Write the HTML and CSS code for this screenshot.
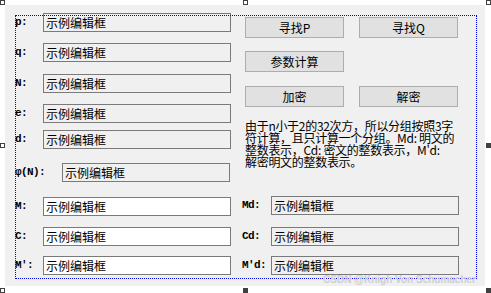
FILE: index.html
```html
<!DOCTYPE html>
<html lang="zh">
<head>
<meta charset="utf-8">
<link rel="stylesheet" href="styles.css">
</head>
<body>
<div class="handle hollow h-tl"></div>
<div class="handle hollow h-tm"></div>
<div class="handle hollow h-tr"></div>
<div class="handle hollow h-ml"></div>
<div class="handle solid h-mr"></div>
<div class="handle hollow h-bl"></div>
<div class="handle solid h-bm"></div>
<div class="handle solid h-br"></div>

<div class="dialog">
  <div class="col-left">
    <div class="row"><span class="lbl">p:</span><span class="edit ro">示例编辑框</span></div>
    <div class="row"><span class="lbl">q:</span><span class="edit ro">示例编辑框</span></div>
    <div class="row"><span class="lbl">N:</span><span class="edit ro">示例编辑框</span></div>
    <div class="row"><span class="lbl">e:</span><span class="edit ro">示例编辑框</span></div>
    <div class="row"><span class="lbl">d:</span><span class="edit ro">示例编辑框</span></div>
    <div class="row"><span class="lbl wide">φ(N):</span><span class="edit ro short">示例编辑框</span></div>
    <div class="row"><span class="lbl">M:</span><span class="edit">示例编辑框</span></div>
    <div class="row"><span class="lbl">C:</span><span class="edit">示例编辑框</span></div>
    <div class="row"><span class="lbl">M':</span><span class="edit">示例编辑框</span></div>
  </div>

  <div class="col-right">
    <div class="btn-row"><span class="btn">寻找P</span><span class="btn">寻找Q</span></div>
    <div class="btn-row"><span class="btn">参数计算</span></div>
    <div class="btn-row"><span class="btn">加密</span><span class="btn">解密</span></div>
    <p class="note">由于n小于2的32次方，所以分组按照3字<br>符计算，且只计算一个分组。Md: 明文的<br>整数表示，Cd: 密文的整数表示，M'd:<br>解密明文的整数表示。</p>
    <div class="row"><span class="lbl rl">Md:</span><span class="edit ro">示例编辑框</span></div>
    <div class="row"><span class="lbl rl">Cd:</span><span class="edit ro">示例编辑框</span></div>
    <div class="row"><span class="lbl rl">M'd:</span><span class="edit ro">示例编辑框</span></div>
  </div>

  <div class="guide"></div>
  <div class="watermark">CSDN @Knigh Von Schumacher</div>
</div>
</body>
</html>
```

FILE: styles.css
```css
html, body {
  margin: 0;
  padding: 0;
  background: #ffffff;
}
body {
  width: 491px;
  height: 293px;
  overflow: hidden;
  position: relative;
  font-family: "Noto Sans CJK SC", "Liberation Sans", sans-serif;
  font-size: 12px;
  color: #000;
}

/* resize handles */
.handle {
  position: absolute;
  width: 5px;
  height: 5px;
  box-sizing: border-box;
}
.hollow { border: 1px solid #404040; background: #fff; }
.solid { background: #404040; }
.h-tl { left: 0; top: 0; }
.h-tm { left: 243px; top: 0; }
.h-tr { left: 486px; top: 0; }
.h-ml { left: 0; top: 143px; }
.h-mr { left: 486px; top: 143px; }
.h-bl { left: 0; top: 288px; }
.h-bm { left: 243px; top: 288px; }
.h-br { left: 486px; top: 288px; }

/* dialog surface */
.dialog {
  position: absolute;
  left: 5px;
  top: 5px;
  width: 480px;
  height: 281px;
  background: #f0f0f0;
  display: flex;
  box-sizing: border-box;
  padding-left: 10px;
}

.col-left {
  width: 216px;
  padding-top: 8px;
  display: grid;
  grid-template-rows: 30px 31px 30px 26px 33px 34px 30px 29px 19px;
  align-content: start;
}

.row {
  display: flex;
  align-items: center;
  height: 19px;
}

.lbl {
  width: 28px;
  flex: none;
  font-family: "Liberation Mono", "DejaVu Sans Mono", monospace;
  font-size: 11px;
  font-weight: bold;
  letter-spacing: -0.6px;
  line-height: 19px;
}
.lbl.wide { width: 47px; }
.lbl.rl { width: 29px; }

.edit {
  box-sizing: border-box;
  width: 188px;
  height: 19px;
  border: 1px solid #7a7a7a;
  background: #ffffff;
  padding-left: 2px;
  display: flex;
  align-items: center;
  line-height: 1;
  white-space: nowrap;
}
.edit.ro { background: #f0f0f0; }
.edit.short { width: 168px; }

.col-right {
  margin-left: 11px;
  width: 218px;
  padding-top: 12px;
  display: grid;
  grid-template-rows: 34px 35px 34px 76px 31px 29px 19px;
  align-content: start;
}

.btn-row {
  display: flex;
  gap: 15px;
  padding-left: 3px;
}
.btn {
  box-sizing: border-box;
  width: 99px;
  height: 21px;
  background: #e1e1e1;
  border: 1px solid #adadad;
  display: flex;
  align-items: center;
  justify-content: center;
  line-height: 1;
}

.note {
  margin: 0;
  padding-left: 3px;
  line-height: 12px;
  letter-spacing: -0.3px;
  white-space: nowrap;
}

.guide {
  position: absolute;
  left: 10px;
  top: 10px;
  width: 460px;
  height: 262px;
  border: 1px dotted #0000ff;
  pointer-events: none;
}

.watermark {
  position: absolute;
  right: 9px;
  top: 269px;
  font-family: "Liberation Sans", Arial, sans-serif;
  font-size: 10px;
  font-weight: bold;
  color: #cfcfcf;
  white-space: nowrap;
}
```
